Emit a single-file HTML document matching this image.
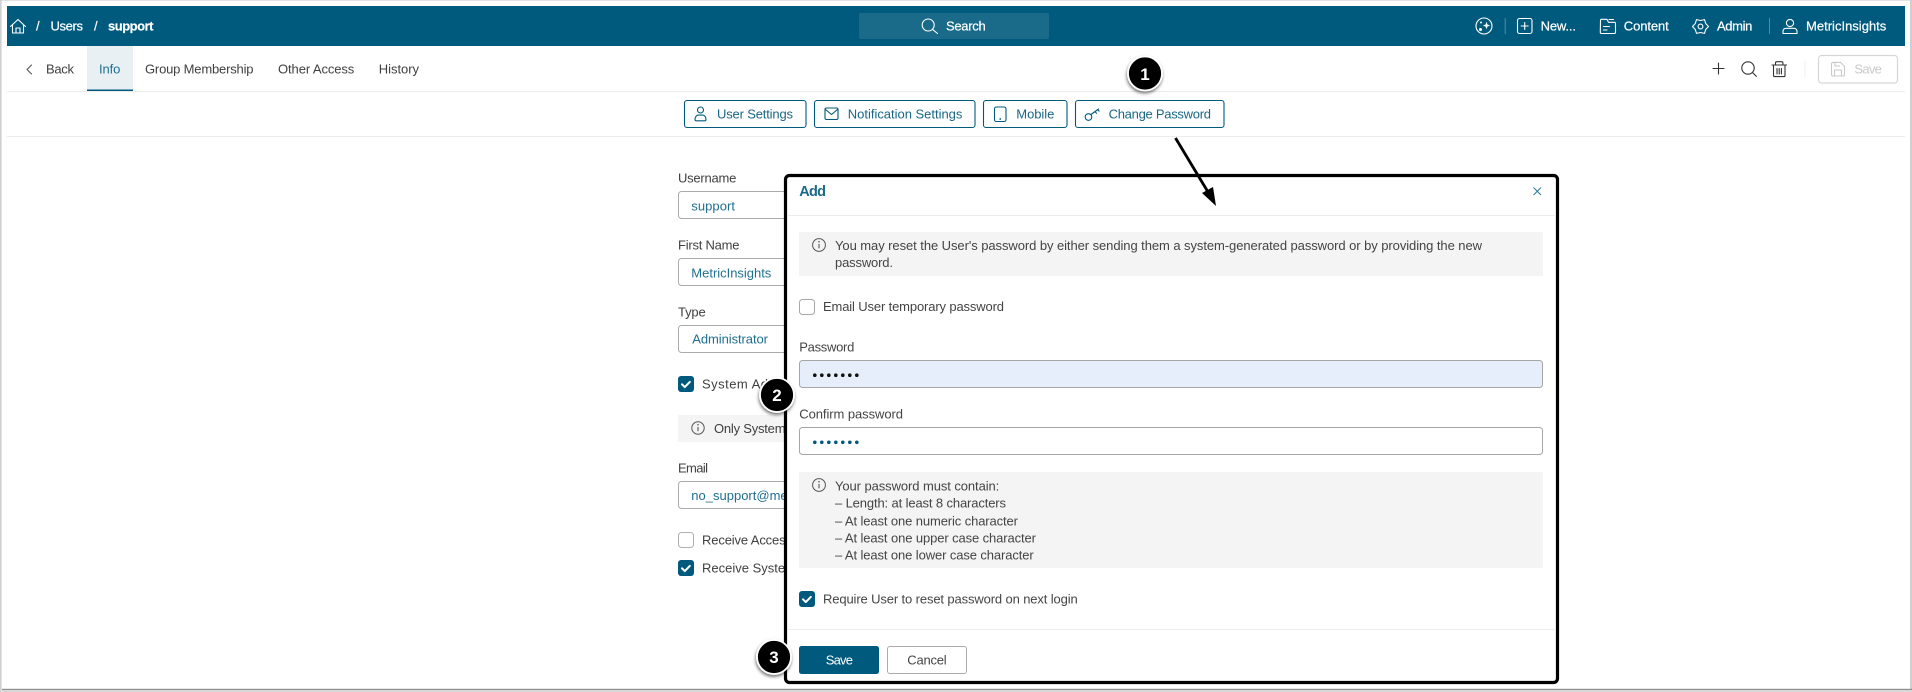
<!DOCTYPE html>
<html><head><meta charset="utf-8"><title>Users / support</title>
<style>
html,body{margin:0;padding:0;background:#fff;width:1912px;height:692px;overflow:hidden}
svg{display:block}
text{font-family:"Liberation Sans",sans-serif;font-size:13px;fill:#3c3c3c}
.w{fill:#fff;font-size:13px;stroke:#fff;stroke-width:.2}
.b{fill:#1f6f8f}
.l{fill:#444}
.t{fill:#404040}
.ic{fill:none;stroke:#fff;stroke-width:1.1;stroke-linecap:round;stroke-linejoin:round}
.bi{fill:none;stroke:#005a7d;stroke-width:1.1;stroke-linecap:round;stroke-linejoin:round}
.dk{fill:none;stroke:#333;stroke-width:1.1;stroke-linecap:round;stroke-linejoin:round}
.gr{fill:none;stroke:#c9c9c9;stroke-width:1.1;stroke-linejoin:round}
.inp{fill:#fff;stroke:#ababab;stroke-width:1}
.btn{fill:#fff;stroke:#005a7d;stroke-width:1.1}
.chk{fill:#005a7d}
.tick{fill:none;stroke:#fff;stroke-width:2;stroke-linecap:round;stroke-linejoin:round}
.num{font-size:17px;font-weight:bold;fill:#fff;text-anchor:middle}
</style></head>
<body>
<svg width="1912" height="692" viewBox="0 0 1912 692" xmlns="http://www.w3.org/2000/svg">
<defs>
<filter id="sh" x="-40%" y="-40%" width="180%" height="180%"><feDropShadow dx="-0.5" dy="2" stdDeviation="1.6" flood-color="#000" flood-opacity=".55"/></filter>
</defs>
<rect width="1912" height="692" fill="#fff"/>
<!-- window edges -->
<rect x="0" y="0" width="1912" height="1" fill="#e2e2e2"/>
<rect x="0" y="0" width="1.6" height="692" fill="#cfcfcf"/>
<rect x="1910" y="0" width="2" height="692" fill="#cfcfcf"/>
<rect x="2" y="688.8" width="1910" height="1.4" fill="#8f8f8f"/>
<rect x="2" y="690.2" width="1910" height="1.8" fill="#d8d8d8"/>

<!-- top bar -->
<rect x="7" y="6" width="1898" height="40" fill="#005a7d"/>
<path class="ic" d="M10.5 26.5 18 19.5l7.5 7M12.5 25v8h11v-8M16 33v-5h4v5"/>
<text class="w" x="36" y="30.5" textLength="3.6">/</text>
<text class="w" x="50.5" y="30.5" textLength="32.5">Users</text>
<text class="w" x="94" y="30.5" textLength="3.6">/</text>
<text class="w" x="108" y="30.5" textLength="45.5" style="font-weight:bold">support</text>

<rect x="859" y="13" width="190" height="26" rx="2" fill="#1a6a8a"/>
<circle cx="928.2" cy="25" r="6" class="ic"/><path class="ic" d="M932.6 29.4 937.5 33.5"/>
<text class="w" x="946" y="30.5" textLength="39.7">Search</text>

<circle cx="1484" cy="26" r="8" class="ic"/>
<path d="M1486.5 21.8l1 2.7 2.7 1-2.7 1-1 2.7-1-2.7-2.7-1 2.7-1z" fill="#fff"/>
<circle cx="1481" cy="22.5" r="1" fill="#fff"/><circle cx="1480.5" cy="29.5" r="1.5" fill="#fff"/>
<rect x="1504.7" y="18" width="1" height="16" fill="#4f8ba4"/>
<rect x="1517.5" y="18.5" width="14.5" height="15" rx="2" class="ic"/>
<path class="ic" d="M1524.7 22.5v7M1521.2 26h7"/>
<text class="w" x="1540.6" y="30.5" textLength="35.4">New...</text>
<path class="ic" d="M1600.5 20.5c0-.7.5-1.2 1.2-1.2h5.2l1.6 3h5.8c.7 0 1.2.5 1.2 1.2v8.8c0 .7-.5 1.2-1.2 1.2h-12.8c-.7 0-1.2-.5-1.2-1.2zM1609 19.5h4.5"/>
<path class="ic" d="M1603.5 26.5h6M1603.5 30h3.5"/>
<text class="w" x="1623.8" y="30.5" textLength="44.9">Content</text>
<path class="ic" d="M1708.5 26.5l-2.8 3-1.2 3.9-4-.9-4 .9-1.2-3.9-2.8-3 2.8-3 1.2-3.9 4 .9 4-.9 1.2 3.9z"/>
<circle cx="1700.5" cy="26.5" r="2.4" class="ic"/>
<text class="w" x="1717" y="30.5" textLength="35.4">Admin</text>
<rect x="1769" y="18" width="1" height="16" fill="#4f8ba4"/>
<circle cx="1790" cy="23" r="3.6" class="ic"/>
<path class="ic" d="M1783 33.5v-2.2c0-1.7 1.4-3 3-3h8c1.6 0 3 1.3 3 3v2.2z"/>
<text class="w" x="1806" y="30.5" textLength="80.3">MetricInsights</text>

<!-- sub nav -->
<rect x="87" y="46" width="46" height="44.5" fill="#e9f0f4"/>
<rect x="87" y="89.5" width="46" height="1.5" fill="#005a7d"/>
<rect x="7" y="91" width="1898" height="1" fill="#ececec"/>
<rect x="7" y="136" width="1898" height="1" fill="#ececec"/>
<path class="dk" d="M31.5 65 27 69.5l4.5 4.5" style="stroke:#555"/>
<text class="t" x="46" y="73.5" textLength="28">Back</text>
<text class="b" x="99" y="73.5" textLength="21.4">Info</text>
<text class="t" x="145" y="73.5" textLength="108.5">Group Membership</text>
<text class="t" x="278" y="73.5" textLength="76.3">Other Access</text>
<text class="t" x="378.8" y="73.5" textLength="40.2">History</text>

<path class="dk" d="M1718.5 63v11M1713 68.5h11"/>
<circle cx="1748" cy="68" r="6.2" class="dk"/><path class="dk" d="M1752.4 72.4l4 4"/>
<path class="dk" d="M1772 65h14.5M1775.5 65v-2c0-.8.6-1.3 1.3-1.3h4.8c.7 0 1.3.5 1.3 1.3v2M1773.5 65v10.2c0 .8.6 1.4 1.4 1.4h8.7c.8 0 1.4-.6 1.4-1.4V65M1777 68.5v5.5M1779.2 68.5v5.5M1781.4 68.5v5.5"/>
<rect x="1804.5" y="61" width="1" height="16" fill="#ececec"/>
<rect x="1818.5" y="55.5" width="79" height="27.5" rx="3" fill="#fff" stroke="#d6d6d6" stroke-width="1.2"/>
<path class="gr" d="M1831.5 64c0-1 .6-1.6 1.6-1.6h7.4l4 4v8c0 1-.6 1.6-1.6 1.6h-9.8c-1 0-1.6-.6-1.6-1.6zM1834.5 76v-6h7v6M1835 62.5v3.5h5"/>
<text x="1854.4" y="73.5" textLength="27.4" style="fill:#c9c9c9">Save</text>

<!-- action buttons -->
<rect x="684.5" y="100.5" width="121.5" height="27" rx="2.5" class="btn"/>
<circle cx="700.5" cy="110" r="3" class="bi"/>
<path class="bi" d="M695 119.5c0-2.4 1.3-4.4 3.3-4.4h4.4c2 0 3.3 2 3.3 4.4 0 .9-.5 1.3-1.3 1.3h-8.4c-.8 0-1.3-.4-1.3-1.3z"/>
<text class="b" x="717" y="118.5" textLength="76" style="fill:#1a6685">User Settings</text>

<rect x="814.5" y="100.5" width="160.5" height="27" rx="2.5" class="btn"/>
<rect x="825" y="108" width="13" height="11.5" rx="1.5" class="bi"/>
<path class="bi" d="M825.5 109.5l6 5 6-5"/>
<text class="b" x="847.8" y="118.5" textLength="114.6" style="fill:#1a6685">Notification Settings</text>

<rect x="983.5" y="100.5" width="83.5" height="27" rx="2.5" class="btn"/>
<rect x="994.5" y="107" width="11.5" height="14.5" rx="1.8" class="bi"/>
<circle cx="1000.2" cy="119" r=".9" fill="#005a7d"/>
<text class="b" x="1016.3" y="118.5" textLength="38" style="fill:#1a6685">Mobile</text>

<rect x="1075.5" y="100.5" width="148.5" height="27" rx="2.5" class="btn"/>
<circle cx="1088.5" cy="117" r="3.3" class="bi"/>
<path class="bi" d="M1091 114.5l7.5-5.5M1095 111.5l1.5 1.8M1097.8 109.5l1.3 1.6"/>
<text class="b" x="1108.6" y="118.5" textLength="102.4" style="fill:#1a6685">Change Password</text>

<!-- background form -->
<text class="t" x="678" y="182.5" textLength="58.3">Username</text>
<rect x="678.5" y="191.5" width="130" height="27" rx="3" class="inp"/>
<text class="b" x="691.3" y="210.5" textLength="43.7">support</text>
<text class="t" x="678" y="249.5" textLength="61.5">First Name</text>
<rect x="678.5" y="258.5" width="130" height="27" rx="3" class="inp"/>
<text class="b" x="691.3" y="277.5" textLength="80">MetricInsights</text>
<text class="t" x="678" y="316.5" textLength="27.7">Type</text>
<rect x="678.5" y="325.5" width="130" height="27" rx="3" class="inp"/>
<text class="b" x="692.3" y="343.5" textLength="75.7">Administrator</text>
<rect x="678" y="376" width="16" height="16" rx="3" class="chk"/>
<path class="tick" d="M682 384.3l2.8 2.8 5-5.2"/>
<text class="t" x="702" y="388.5" textLength="132">System Administrator</text>
<rect x="678" y="415" width="130" height="27" fill="#f4f4f4"/>
<circle cx="698" cy="428" r="6.2" fill="none" stroke="#555" stroke-width="1"/>
<path d="M698 427v4.2" stroke="#555" stroke-width="1.1"/><circle cx="698" cy="424.8" r=".8" fill="#555"/>
<text class="t" x="714" y="433" textLength="110">Only System Admin</text>
<text class="t" x="678" y="472.5" textLength="30">Email</text>
<rect x="678.5" y="481.5" width="130" height="27" rx="3" class="inp"/>
<text class="b" x="691.3" y="500" textLength="186">no_support@metricinsights.com</text>
<rect x="678.5" y="532.5" width="15" height="15" rx="3" fill="#fff" stroke="#b0b0b0"/>
<text class="t" x="702" y="544.5" textLength="90">Receive Access</text>
<rect x="678" y="560" width="16" height="16" rx="3" class="chk"/>
<path class="tick" d="M682 568.3l2.8 2.8 5-5.2"/>
<text class="t" x="702" y="572.5" textLength="94">Receive System</text>

<!-- modal -->
<rect x="785.5" y="175.5" width="772" height="507" rx="4" fill="#fff" stroke="#000" stroke-width="3.2"/>
<text x="799.3" y="196" textLength="26.7" style="font-weight:bold;font-size:14.5px;fill:#1a6a8a">Add</text>
<path d="M1533.5 187.5l7.5 7.5M1541 187.5l-7.5 7.5" fill="none" stroke="#2a7a9a" stroke-width="1"/>
<rect x="787" y="215" width="769" height="1" fill="#ececec"/>

<rect x="799" y="232" width="744" height="44" fill="#f4f4f4"/>
<circle cx="819" cy="245" r="6.4" fill="none" stroke="#555" stroke-width="1"/>
<path d="M819 244v4.3" stroke="#555" stroke-width="1.1"/><circle cx="819" cy="241.8" r=".8" fill="#555"/>
<text class="l" x="835" y="250" textLength="647">You may reset the User's password by either sending them a system-generated password or by providing the new</text>
<text class="l" x="835" y="267" textLength="58">password.</text>

<rect x="799.5" y="299.5" width="15" height="15" rx="3" fill="#fff" stroke="#a8a8a8"/>
<text class="l" x="823" y="311" textLength="181">Email User temporary password</text>

<text class="l" x="799.3" y="351.5" textLength="55">Password</text>
<rect x="799.5" y="360.5" width="743" height="27" rx="3" fill="#e7eefb" stroke="#a6a6a6"/>
<g fill="#111"><circle cx="814.8" cy="375.2" r="1.8"/><circle cx="821.8" cy="375.2" r="1.8"/><circle cx="828.8" cy="375.2" r="1.8"/><circle cx="835.8" cy="375.2" r="1.8"/><circle cx="842.8" cy="375.2" r="1.8"/><circle cx="849.8" cy="375.2" r="1.8"/><circle cx="856.8" cy="375.2" r="1.8"/></g>

<text class="l" x="799.3" y="418.5" textLength="103.7">Confirm password</text>
<rect x="799.5" y="427.5" width="743" height="27" rx="3" fill="#fff" stroke="#a6a6a6"/>
<g fill="#005a7d"><circle cx="814.8" cy="442.3" r="1.8"/><circle cx="821.8" cy="442.3" r="1.8"/><circle cx="828.8" cy="442.3" r="1.8"/><circle cx="835.8" cy="442.3" r="1.8"/><circle cx="842.8" cy="442.3" r="1.8"/><circle cx="849.8" cy="442.3" r="1.8"/><circle cx="856.8" cy="442.3" r="1.8"/></g>

<rect x="799" y="472" width="744" height="96" fill="#f4f4f4"/>
<circle cx="819" cy="485" r="6.4" fill="none" stroke="#555" stroke-width="1"/>
<path d="M819 484v4.3" stroke="#555" stroke-width="1.1"/><circle cx="819" cy="481.8" r=".8" fill="#555"/>
<text class="l" x="835" y="490.5" textLength="164.3">Your password must contain:</text>
<text class="l" x="835" y="507.5" textLength="171">– Length: at least 8 characters</text>
<text class="l" x="835" y="525.5" textLength="183">– At least one numeric character</text>
<text class="l" x="835" y="542.5" textLength="201">– At least one upper case character</text>
<text class="l" x="835" y="559.5" textLength="198.7">– At least one lower case character</text>

<rect x="799" y="591" width="16" height="16" rx="3" class="chk"/>
<path class="tick" d="M803 599.3l2.8 2.8 5-5.2"/>
<text class="l" x="823" y="603.5" textLength="254.7">Require User to reset password on next login</text>

<rect x="787" y="629" width="769" height="1" fill="#ececec"/>
<rect x="799" y="646" width="80" height="28" rx="2.5" fill="#005a7d"/>
<text x="825.7" y="664.5" textLength="27.3" style="fill:#fff">Save</text>
<rect x="887.5" y="646.5" width="79" height="27" rx="2.5" fill="#fff" stroke="#ababab"/>
<text class="l" x="907.3" y="664.5" textLength="39.4">Cancel</text>

<!-- arrow -->
<path d="M1175.5 138 1208 192" stroke="#000" stroke-width="2.8" fill="none"/>
<path d="M1216 206 1202 193 1213 187z" fill="#000"/>

<!-- badges -->
<g filter="url(#sh)"><circle cx="1145" cy="73.5" r="17" fill="#000" stroke="#fff" stroke-width="1.8"/></g>
<text class="num" x="1145" y="80">1</text>
<g filter="url(#sh)"><circle cx="777" cy="395" r="17" fill="#000" stroke="#fff" stroke-width="1.8"/></g>
<text class="num" x="777" y="401">2</text>
<g filter="url(#sh)"><circle cx="774" cy="657" r="17" fill="#000" stroke="#fff" stroke-width="1.8"/></g>
<text class="num" x="774" y="663">3</text>
</svg>
</body></html>
